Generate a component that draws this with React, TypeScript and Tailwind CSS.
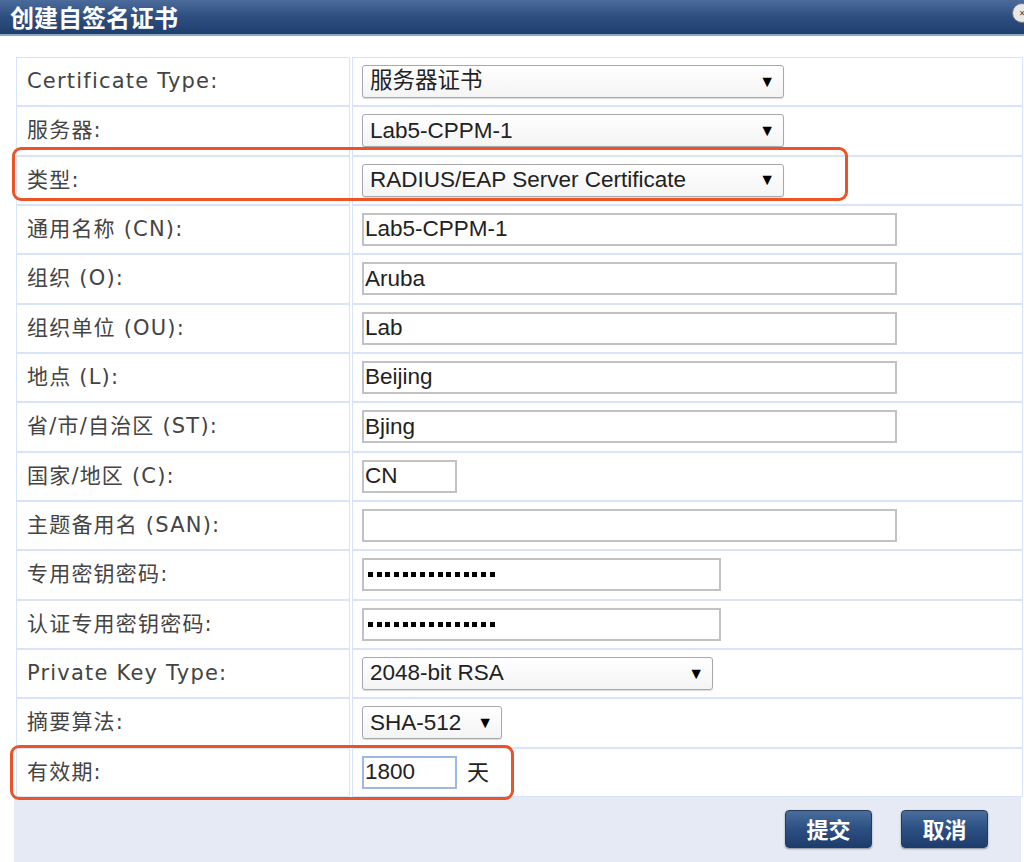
import React from "react";

const labelFont = { fontFamily: '"DejaVu Sans", Verdana, "Noto Sans CJK SC", sans-serif' };
const valueFont = { fontFamily: '"Liberation Sans", Arial, "Noto Sans CJK SC", sans-serif' };

function Select({ text, w }: { text: string; w: string }) {
  return (
    <div
      className={`${w} h-[33px] flex items-center justify-between pl-[7px] pr-[8px] rounded-[3px] border border-[#a8a8a8] bg-gradient-to-b from-white to-[#f4f4f4] shadow-[0_1px_1px_rgba(0,0,0,0.15)] text-[22.5px] text-[#222]`}
      style={valueFont}
    >
      <span className="leading-none">{text}</span>
      <span className="text-[16px] leading-none text-black">▼</span>
    </div>
  );
}

function TextInput({ text, w, focus }: { text: string; w: string; focus?: boolean }) {
  return (
    <div
      className={`${w} h-[33px] flex items-center pl-[1px] bg-white border-2 ${focus ? "border-[#9bb8e6]" : "border-[#c2c2c2]"} text-[22.5px] text-[#222]`}
      style={valueFont}
    >
      <span className="leading-none">{text}</span>
    </div>
  );
}

function Password({ w }: { w: string }) {
  return (
    <div className={`${w} h-[33px] flex items-center pl-[4px] gap-[3.7px] bg-white border-2 border-[#c2c2c2]`}>
      {Array.from({ length: 15 }).map((_, i) => (
        <span key={i} className="w-[5px] h-[5px] bg-black inline-block" />
      ))}
    </div>
  );
}

type Row = { label: string; value: React.ReactNode };

const rows: Row[] = [
  { label: "Certificate Type:", value: <Select text="服务器证书" w="w-[422px]" /> },
  { label: "服务器:", value: <Select text="Lab5-CPPM-1" w="w-[422px]" /> },
  { label: "类型:", value: <Select text="RADIUS/EAP Server Certificate" w="w-[422px]" /> },
  { label: "通用名称 (CN):", value: <TextInput text="Lab5-CPPM-1" w="w-[535px]" /> },
  { label: "组织 (O):", value: <TextInput text="Aruba" w="w-[535px]" /> },
  { label: "组织单位 (OU):", value: <TextInput text="Lab" w="w-[535px]" /> },
  { label: "地点 (L):", value: <TextInput text="Beijing" w="w-[535px]" /> },
  { label: "省/市/自治区 (ST):", value: <TextInput text="Bjing" w="w-[535px]" /> },
  { label: "国家/地区 (C):", value: <TextInput text="CN" w="w-[95px]" /> },
  { label: "主题备用名 (SAN):", value: <TextInput text="" w="w-[535px]" /> },
  { label: "专用密钥密码:", value: <Password w="w-[359px]" /> },
  { label: "认证专用密钥密码:", value: <Password w="w-[359px]" /> },
  { label: "Private Key Type:", value: <Select text="2048-bit RSA" w="w-[351px]" /> },
  { label: "摘要算法:", value: <Select text="SHA-512" w="w-[140px]" /> },
  {
    label: "有效期:",
    value: (
      <div className="flex items-center gap-[10px]">
        <TextInput text="1800" w="w-[95px]" focus />
        <span className="text-[22px] text-[#222]" style={valueFont}>天</span>
      </div>
    ),
  },
];

function Btn({ text }: { text: string }) {
  return (
    <div
      className="w-[87px] h-[38px] flex items-center justify-center rounded-[4px] border border-[#2a3a55] bg-gradient-to-b from-[#4a6d9f] via-[#2c4f82] to-[#1d3d6c] text-white text-[22px] font-bold shadow-[0_1px_2px_rgba(0,0,0,0.4)]"
      style={{ fontFamily: '"Noto Sans CJK SC", sans-serif' }}
    >
      {text}
    </div>
  );
}

export default function App() {
  return (
    <div className="w-[1024px] h-[862px] bg-white relative overflow-hidden">
      <div className="h-[34px] bg-gradient-to-b from-[#4b6b9b] via-[#2d4f80] to-[#1f3e6e] flex items-center pl-[10px]">
        <span
          className="text-white text-[24px] font-bold leading-none"
          style={{ fontFamily: '"Noto Sans CJK SC", sans-serif' }}
        >
          创建自签名证书
        </span>
      </div>
      <div className="h-[2px] bg-[#8fa6cc]" />
      <div className="absolute right-[-8px] top-[3px] w-[20px] h-[20px] rounded-full bg-[#e8e8e8] border border-[#777] flex items-center justify-center text-[10px] text-[#444]">
        ×
      </div>

      <div className="pt-[21px] pl-[16px] pr-[1px]">
        {rows.map((r, i) => (
          <div key={i} className="grid grid-cols-[334px_1fr] gap-x-[2px] h-[49.33px]">
            <div className="border border-[#d8e4f8] flex items-center pl-[10px] text-[21px] text-[#444] tracking-[1.2px]" style={labelFont}>
              {r.label}
            </div>
            <div className="border border-[#d8e4f8] flex items-center pl-[9px]">{r.value}</div>
          </div>
        ))}
      </div>

      <div className="ml-[14px] mr-[3px] h-[65px] bg-[#e6eaf5] flex items-start justify-end gap-[29px] pt-[13px] pr-[33px]">
        <Btn text="提交" />
        <Btn text="取消" />
      </div>

      <div className="absolute left-[12px] top-[147px] w-[836px] h-[54px] rounded-[9px] border-[3px] border-[#eb5428] pointer-events-none" />
      <div className="absolute left-[10px] top-[745px] w-[504px] h-[55px] rounded-[9px] border-[3px] border-[#eb5428] pointer-events-none" />
    </div>
  );
}
